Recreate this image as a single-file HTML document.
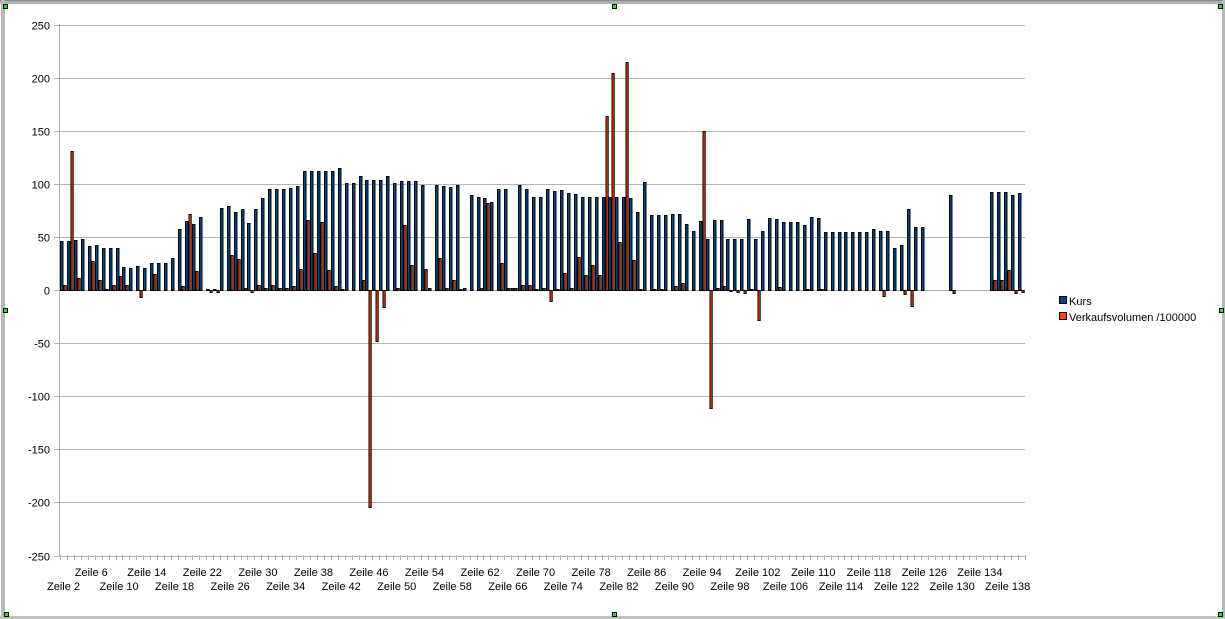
<!DOCTYPE html>
<html><head><meta charset="utf-8"><style>
html,body{margin:0;padding:0;background:#fff;width:1225px;height:619px;overflow:hidden}
svg{display:block}
text{font-family:"Liberation Sans",sans-serif;font-size:11px;fill:#000}
</style></head><body>
<svg id="s" width="1225" height="619" xmlns="http://www.w3.org/2000/svg">
<rect x="0" y="0" width="1225" height="619" fill="#fff"/>
<rect x="0" y="0" width="1225" height="4" fill="#b0b0b0"/>
<rect x="0" y="0" width="1225" height="1" fill="#888"/>
<rect x="1" y="0" width="4" height="619" fill="#b8b8b8"/>
<rect x="1222" y="0" width="3" height="619" fill="#b8b8b8"/>
<rect x="0" y="616" width="1225" height="3" fill="#c0c0c0"/>
<g id="grid"></g>
<g id="bars"></g>
<g id="lab"></g>
<rect x="1059.5" y="296.5" width="7" height="7" fill="#004586" stroke="#000"/>
<text x="1069" y="305">Kurs</text>
<rect x="1059.5" y="312.5" width="7" height="7" fill="#ff420e" stroke="#000"/>
<text x="1069" y="321">Verkaufsvolumen /100000</text>
<g fill="#00ff00" stroke="#000" stroke-width="1">
<rect x="3.5" y="4.5" width="4" height="4"/><rect x="612.5" y="4.5" width="4" height="4"/><rect x="1218.5" y="4.5" width="4" height="4"/>
<rect x="3.5" y="308.5" width="4" height="4"/><rect x="1219.5" y="308.5" width="4" height="4"/>
<rect x="4.5" y="612.5" width="4" height="4"/><rect x="612.5" y="612.5" width="4" height="4"/><rect x="1218.5" y="612.5" width="4" height="4"/>
</g>
</svg>
<script>
(function(){
var K=[46,46,47,48,41,42,40,40,40,22,21,23,21,25,25,25,30,57,65,62,69,1,1,77,79,73,76,63,76,87,95,95,95,96,98,
112,112,112,112,112,115,101,101,107,104,104,104,107,101,103,103,103,99,2,99,98,97,99,2,89,88,87,83,95,95,2,99,95,88,
88,95,93,94,91,90,88,88,88,88,88,88,88,87,73,102,71,71,71,72,72,62,56,65,48,66,66,48,48,48,67,48,56,68,67,
64,64,64,61,69,68,55,55,55,55,55,55,55,57,56,56,40,42,76,59,59,0,0,0,89,0,0,0,0,0,92,92,92,89,91];
var R=[5,131,11,0,27,9,1,5,13,5,0,-7,0,15,0,0,0,4,72,18,0,-2,-2,0,33,29,2,-2,5,2,5,2,2,4,20,
66,35,64,19,4,1,0,0,9,-204,-48,-16,0,2,61,24,0,20,0,30,2,9,1,0,0,2,82,0,25,2,2,5,5,1,
2,-10,1,16,2,31,14,24,14,164,204,45,215,28,1,0,1,1,0,4,7,0,0,150,-111,2,4,-1,-2,-3,1,-28,0,0,3,
0,0,0,1,0,1,0,0,0,0,0,0,0,0,-6,0,0,-4,-15,0,0,0,0,0,-3,0,0,0,0,0,9,9,19,-3,-2];
var NS="http://www.w3.org/2000/svg";
function el(p,t,a,txt){var e=document.createElementNS(NS,t);for(var k in a)e.setAttribute(k,a[k]);if(txt!=null)e.textContent=txt;p.appendChild(e);return e;}
var g=document.getElementById('grid'),b=document.getElementById('bars'),l=document.getElementById('lab');
var y0=290,sc=1.062;
for(var v=250;v>=-250;v-=50){var y=Math.round(y0-v*sc)+0.5;
el(g,'line',{x1:54,x2:1025,y1:y,y2:y,stroke:'#b3b3b3','stroke-width':1});
el(l,'text',{x:50,y:y+4,'text-anchor':'end'},String(v));}
el(g,'line',{x1:59.5,x2:59.5,y1:24,y2:556,stroke:'#b3b3b3'});
var P=965/139;
for(var i=0;i<=139;i++){var x=Math.round(60+P*i)+0.5;el(g,'line',{x1:x,x2:x,y1:555,y2:560,stroke:'#b3b3b3'});}
function bar(x,w,v,c){var h=v*sc,y=v>=0?y0-h:y0;h=Math.abs(h);if(h<1)h=1;
el(b,'rect',{x:x+0.5,y:Math.round(y)+0.5,width:w,height:Math.max(1,Math.round(h)),fill:c,stroke:'#000','stroke-width':1});}
for(var i=0;i<139;i++){var x=Math.round(60+P*i);
if(K[i])bar(x,2.5,K[i],'#004586');
if(R[i])bar(x+3.5,2.2,R[i],'#ff420e');}
for(var i=0;i<139;i+=4){var cx=60+P*i+3.5,upper=((i/4)%2)==1;
el(l,'text',{x:cx,y:upper?576:590,'text-anchor':'middle'},'Zeile '+(i+2));}
})();
</script>
</body></html>
